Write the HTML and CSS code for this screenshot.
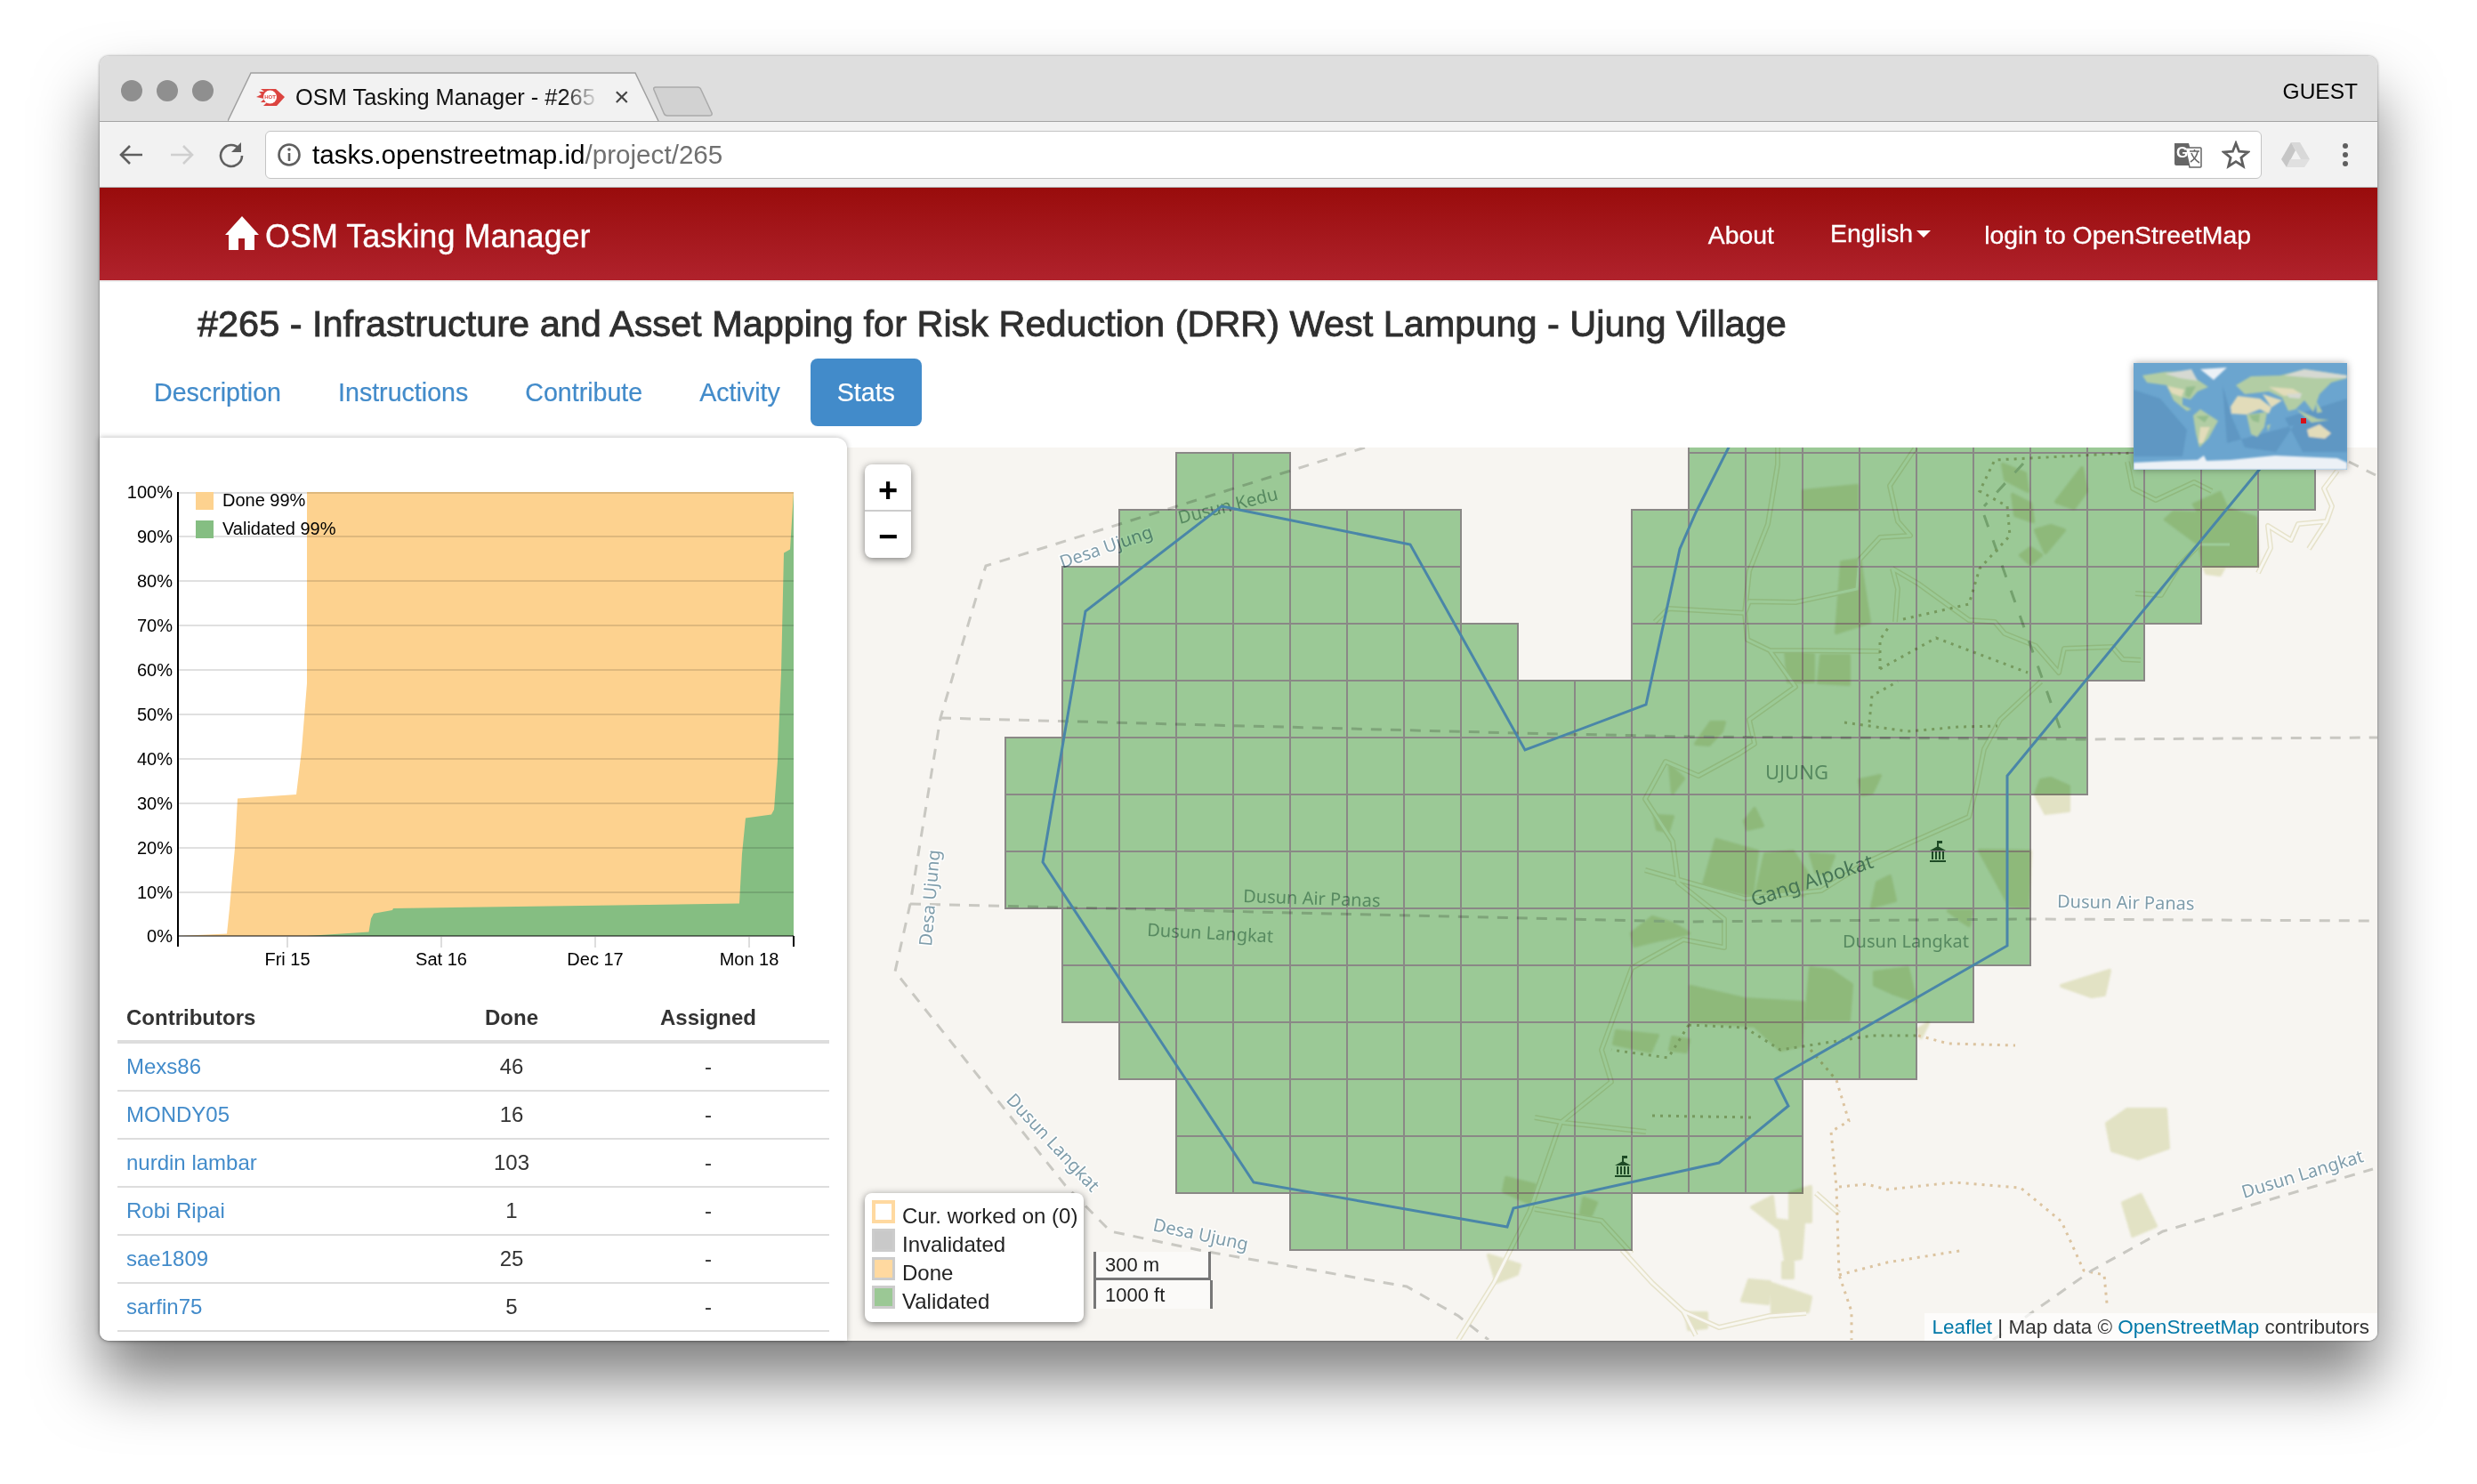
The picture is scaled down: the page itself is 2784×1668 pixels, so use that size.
FILE: index.html
```html
<!DOCTYPE html>
<html lang="en">
<head>
  <meta charset="UTF-8" />
  <meta name="viewport" content="width=device-width, initial-scale=1.0" />
  <title>OSM Tasking Manager - #265</title>
  <link rel="stylesheet" href="styles.css">
</head>
<body>
  <div class="window">

    <div class="tabstrip">
      <div class="dots"><span></span><span></span><span></span></div>
      <div class="tab">
        <svg class="tab-shape" width="486" height="56" viewBox="0 0 486 56">
          <path d="M0 55 L26 1 H458 L484 55" />
        </svg>
        <svg class="favicon" width="32" height="20" viewBox="0 0 32 20">
          <path class="fav-red" d="M5 1 H22 L32 10 L23 20 H8 L12 16 H5 L9 12 L0 10 L6 7 L3 4 H9 Z" />
          <circle class="fav-white" cx="15.5" cy="10" r="7.5" />
          <text class="fav-text" x="15.5" y="12">HOT</text>
        </svg>
        <span class="tab-title">OSM Tasking Manager - #265</span>
        <span class="tab-close">×</span>
      </div>
      <svg class="newtab" width="68" height="34" viewBox="0 0 68 34">
        <path d="M3 1 H50 Q53 1 54 4 L66 30 Q67 33 63 33 H16 Q13 33 12 30 L1 4 Q0 1 3 1 Z" />
      </svg>
      <span class="guest">GUEST</span>
    </div>

    <div class="toolbar">
      <svg class="tool" width="32" height="32" viewBox="0 0 32 32">
        <path class="ico-line" d="M28 16 H5 M14 6 L4 16 L14 26" />
      </svg>
      <svg class="tool tool-off" width="32" height="32" viewBox="0 0 32 32">
        <path class="ico-line" d="M4 16 H27 M18 6 L28 16 L18 26" />
      </svg>
      <svg class="tool" width="32" height="32" viewBox="0 0 32 32">
        <path class="ico-line" d="M25 9 A12 12 0 1 0 28 17" />
        <path class="ico-fill" d="M27 2 V13 H16 Z" />
      </svg>
      <div class="urlbar">
        <svg width="28" height="28" viewBox="0 0 28 28">
          <circle class="ico-line" cx="14" cy="14" r="11.5" />
          <path class="ico-line" d="M14 12 V21" />
          <circle class="ico-fill" cx="14" cy="8" r="1.8" />
        </svg>
        <span class="url"><b>tasks.openstreetmap.id</b>/project/265</span>
        <svg class="translate" width="32" height="30" viewBox="0 0 32 30">
          <path class="tr-back" d="M1 2 H17 L24 27 H3 Q1 27 1 25 Z" />
          <path class="tr-page" d="M13 7 H30 Q31 7 31 8 V28 Q31 29 30 29 H18 Z" />
          <text class="tr-g" x="3" y="18">G</text>
          <path class="tr-zh" d="M18 11 H29 M23.5 9 V11 M27 11 C26 18 22 21 19 23 M20 13 C22 19 26 22 29 24" />
        </svg>
        <svg class="star" width="32" height="32" viewBox="0 0 32 32">
          <path d="M16 3 L19.6 12.2 L29.5 12.9 L21.9 19.2 L24.3 28.9 L16 23.6 L7.7 28.9 L10.1 19.2 L2.5 12.9 L12.4 12.2 Z" />
        </svg>
      </div>
      <svg class="drive" width="34" height="30" viewBox="0 0 34 30">
        <path class="drive-a" d="M12 1 H22 L33 20 H23 Z" />
        <path class="drive-b" d="M12 1 L17 10 L7 29 L1 20 Z" />
        <path class="drive-c" d="M11 20 H33 L27 29 H7 Z" />
      </svg>
      <div class="kebab"><span></span><span></span><span></span></div>
    </div>

    <header class="topbar">
      <a class="brand">
        <svg width="38" height="38" viewBox="0 0 38 38">
          <path d="M19 0 L38 21 H33 V38 H22 V25 H15 V38 H4 V21 H0 Z" />
        </svg>
        OSM Tasking Manager
      </a>
      <nav class="topnav">
        <a>About</a>
        <a class="lang">English<i class="caret"></i></a>
        <a>login to OpenStreetMap</a>
      </nav>
    </header>

    <h1 class="title">#265 - Infrastructure and Asset Mapping for Risk Reduction (DRR) West Lampung - Ujung Village</h1>

    <ul class="pills">
      <li>Description</li>
      <li>Instructions</li>
      <li>Contribute</li>
      <li>Activity</li>
      <li class="on">Stats</li>
    </ul>

    <svg class="minimap" width="240" height="120" viewBox="0 0 240 120">
      <defs>
        <filter id="soft" x="-10%" y="-10%" width="120%" height="120%"><feGaussianBlur stdDeviation="1.2" /></filter>
      </defs>
      <rect class="mm-sea" width="240" height="120" />
      <g filter="url(#soft)">
        <path class="mm-deep" d="M0 30 L30 40 L60 75 L55 105 L0 105 Z M100 25 L110 60 L125 95 L160 100 L180 70 L150 78 L105 90 Z M170 62 L240 40 V100 L190 100 Z" />
        <path class="mm-land" d="M10 14 L35 10 L59 9 L72 19 L84 27 L72 32 L64 41 L55 39 L55 47 L65 52 L60 54 L45 42 L37 25 L15 22 Z" />
        <path class="mm-sand" d="M38 26 L57 30 L54 38 L43 34 Z" />
        <path class="mm-green" d="M59 27 L70 26 L63 39 L58 37 Z" />
        <path class="mm-grey" d="M35 12 L65 7 L72 20 L52 17 Z" />
        <path class="mm-land" d="M67 59 L75 52 L95 65 L84 85 L74 95 L70 79 Z" />
        <path class="mm-sand" d="M75 72 L86 72 L78 90 L73 90 Z" />
        <path class="mm-green" d="M70 60 L85 59 L80 67 Z" />
        <path class="mm-land" d="M115 25 L132 15 L165 14 L192 7 L240 14 V17 L222 22 L209 35 L202 55 L192 42 L182 52 L174 54 L167 39 L152 32 L125 35 Z" />
        <path class="mm-sand" d="M109 49 L117 37 L142 40 L155 50 L152 57 L142 52 L127 58 L110 57 Z" />
        <path class="mm-land" d="M127 58 L150 55 L147 72 L139 83 L132 80 Z" />
        <path class="mm-green" d="M130 59 L142 57 L141 67 L134 65 Z" />
        <path class="mm-sand" d="M145 35 L167 42 L155 50 Z M152 27 L179 29 L189 35 L169 37 Z" />
        <path class="mm-grey" d="M169 14 L192 7 L240 14 L239 17 L205 17 Z M172 35 L189 34 L187 40 L175 39 Z" />
        <path class="mm-land" d="M183 52 L207 63 L220 64 L200 67 Z M205 42 L212 55 L206 56 Z M150 70 L154 69 L151 77 Z" />
        <path class="mm-sand" d="M195 75 L209 69 L222 79 L215 85 L197 83 Z" />
        <path class="mm-ice" d="M75 7 L105 5 L90 19 Z M0 112 L42 110 L72 109 L79 104 L82 110 L109 109 L159 104 L229 107 L240 112 V120 H0 Z" />
      </g>
      <rect class="mm-pin" x="188" y="62" width="6" height="6" />
    </svg>

    <div class="content">
      <aside class="panel">
        <svg class="chart" width="840" height="627" viewBox="112 493 840 627">
          <g transform="translate(200 554)">
            <path class="area-done" d="M0 499 L55 496.6 L58 468 L64 400 L67 344.4 L133 340 L139 290 L145 215 V0 H692 V499 Z" />
            <path class="area-valid" d="M145 499 L214.5 494.6 L217 479.6 L220 473.7 L241 470 L242 468 L631 462.6 L634 406.5 L638 366.5 L667 362.6 L670 357 L674 301.7 L678 203 L681 68.4 L688 64.5 L692 0 V499 Z" />
            <path class="grid" d="M0 1 H692 M0 50 H692 M0 100 H692 M0 150 H692 M0 200 H692 M0 250 H692 M0 300 H692 M0 350 H692 M0 400 H692 M0 450 H692" />
            <path class="base" d="M0 499 H692" />
            <path class="tick-soft" d="M123 500 V512 M296 500 V512 M469 500 V512 M642 500 V512" />
            <path class="axis" d="M0 0 V511 M692 499 V511" />
            <g class="ylabels">
              <text x="-6" y="7">100%</text>
              <text x="-6" y="57">90%</text>
              <text x="-6" y="107">80%</text>
              <text x="-6" y="157">70%</text>
              <text x="-6" y="207">60%</text>
              <text x="-6" y="257">50%</text>
              <text x="-6" y="307">40%</text>
              <text x="-6" y="357">30%</text>
              <text x="-6" y="407">20%</text>
              <text x="-6" y="457">10%</text>
              <text x="-6" y="506">0%</text>
            </g>
            <g class="xlabels">
              <text x="123" y="532">Fri 15</text>
              <text x="296" y="532">Sat 16</text>
              <text x="469" y="532">Dec 17</text>
              <text x="642" y="532">Mon 18</text>
            </g>
            <rect class="area-done" x="20" y="0" width="20" height="20" />
            <rect class="area-valid" x="20" y="32" width="20" height="20" />
            <text class="chart-key" x="50" y="16">Done 99%</text>
            <text class="chart-key" x="50" y="48">Validated 99%</text>
          </g>
        </svg>

        <table class="people">
          <thead>
            <tr><th>Contributors</th><th>Done</th><th>Assigned</th></tr>
          </thead>
          <tbody>
            <tr><td><a>Mexs86</a></td><td>46</td><td>-</td></tr>
            <tr><td><a>MONDY05</a></td><td>16</td><td>-</td></tr>
            <tr><td><a>nurdin lambar</a></td><td>103</td><td>-</td></tr>
            <tr><td><a>Robi Ripai</a></td><td>1</td><td>-</td></tr>
            <tr><td><a>sae1809</a></td><td>25</td><td>-</td></tr>
            <tr><td><a>sarfin75</a></td><td>5</td><td>-</td></tr>
          </tbody>
        </table>
      </aside>

      <div class="map">
        <svg class="map-canvas" width="1720" height="1003" viewBox="952 504 1720 1003">
          <defs>
            <path id="roads" d="M1998 504 L1998 523 L1987 590 L1966 643 L1961 690 L1964 720 L1989 732 L2018 773 L1966 810 L1972 837 L1955 848 L1909 873 L1872 857 L1849 899 L1880 947 L1886 993 L1938 1034 L1938 1066 L1892 1057 L1834 1089 L1800 1181 L1811 1217 L1754 1263 L1719 1363 L1679 1443 L1639 1507
              M2153 504 L2124 547 L2133 587 L2147 603 L2113 605 L2090 630 L2087 663 L2018 678 L1966 677 L1961 690 L1875 685 L1860 700
              M2127 640 L2133 663 L2130 700
              M2127 640 L2156 657 L2213 698 L2242 700 L2253 713 L2288 727 L2314 757 L2320 730 L2374 728 L2386 742 L2406 743
              M1989 732 L2113 733
              M2294 767 L2248 810 L2230 843 L2222 883 L2213 919 L2098 970 L2047 1002 L1961 1011 L1849 979
              M2391 520 L2397 550 L2423 563 L2466 543 L2486 553
              M2627 530 L2612 550 L2621 570 L2615 587 L2583 590 L2575 608 L2549 592 L2552 617 L2538 645
              M2615 587 L2595 618
              M2506 613 L2472 613 L2449 637 L2429 670 L2400 668
              M1823 1406 L1857 1443 L1892 1475 L1932 1493 L1989 1480 L2030 1477
              M1892 1475 L1906 1502
              M2041 1342 L2067 1365
              M1725 1360 L1800 1373 L1834 1410
              M1725 1257 L1759 1263 L1850 1273" />
            <symbol id="temple" viewBox="0 0 20 24">
              <path d="M9 0 H15 V3 H11 V7 H9 Z M1 11 L10 6 L19 11 Z M1 22 H19 V24 H1 Z M3 12 H5 V21 H3 Z M7 12 H9 V21 H7 Z M11 12 H13 V21 H11 Z M15 12 H17 V21 H15 Z" />
            </symbol>
          </defs>

          <g class="land">
            <path d="M2288 894 L2325 894 L2325 912 L2299 915 Z" />
            <path d="M2317 1109 L2371 1092 L2365 1119 L2351 1121 Z" />
            <path d="M2368 1264 L2391 1248 L2434 1248 L2437 1291 L2403 1303 L2374 1294 Z" />
            <path d="M2386 1353 L2406 1344 L2423 1379 L2397 1390 Z" />
            <path d="M1969 1358 L1992 1346 L1995 1372 L2027 1376 L2024 1415 L2007 1418 L2001 1383 Z" />
            <path d="M2012 1342 L2035 1335 L2035 1374 L2012 1374 Z" />
            <path d="M2004 1420 H2015 V1437 H2004 Z" />
            <path d="M1966 1440 L1989 1442 L1987 1466 L1958 1463 Z" />
            <path d="M1991 1444 L2035 1459 L2032 1475 L1992 1480 Z" />
            <path d="M1895 1477 H1918 V1493 L1898 1495 Z" />
            <path d="M2477 638 H2500 L2495 647 L2480 645 Z" />
            <path d="M2156 1158 L2167 1151 L2159 1167 Z" />
            <path d="M1673 1412 L1708 1423 L1705 1433 L1682 1442 Z" />
            <path d="M2027 553 L2087 547 V573 H2027 Z" />
            <path d="M2070 633 L2090 630 L2101 700 L2064 712 Z" />
            <path d="M2007 733 L2038 737 V767 L2010 767 Z" />
            <path d="M2047 738 H2078 V770 L2044 768 Z" />
            <path d="M2251 523 L2276 533 L2279 553 L2254 540 Z" />
            <path d="M2262 557 L2282 567 L2285 587 L2265 580 Z" />
            <path d="M2340 527 L2345 553 L2331 572 L2311 565 Z" />
            <path d="M2288 597 L2305 592 L2320 597 L2299 622 Z" />
            <path d="M2271 625 L2282 617 L2294 625 L2282 635 Z" />
            <path d="M2466 568 L2495 555 L2503 573 L2535 583 L2538 637 L2477 638 L2472 613 L2434 585 L2443 577 L2472 578 Z" />
            <path d="M1923 813 H1938 L1935 823 L1921 838 L1906 837 Z" />
            <path d="M1877 862 L1892 876 L1880 892 Z" />
            <path d="M2090 878 L2113 873 L2104 892 L2093 894 Z" />
            <path d="M1860 918 L1880 919 L1875 935 L1863 933 Z" />
            <path d="M1961 924 L1972 910 L1981 929 L1964 933 Z" />
            <path d="M1929 945 L1975 958 L1969 1007 L1915 995 Z" />
            <path d="M1984 961 L2015 958 L2032 984 L2027 1007 L1975 1002 Z" />
            <path d="M2035 961 L2061 963 L2053 984 L2041 981 Z" />
            <path d="M2110 993 L2124 986 L2130 1013 L2104 1020 Z" />
            <path d="M2225 957 L2282 958 L2279 1020 L2259 1019 Z" />
            <path d="M2190 1025 H2216 L2213 1041 L2202 1034 Z" />
            <path d="M1834 1050 L1857 1032 L1880 1039 L1898 1050 L1857 1059 L1837 1064 Z" />
            <path d="M1900 1110 L1961 1124 L2027 1128 L2024 1176 L2001 1181 L1972 1154 L1900 1149 Z" />
            <path d="M2035 1089 L2058 1092 L2081 1108 L2078 1147 H2030 Z" />
            <path d="M2107 1094 L2144 1089 L2153 1126 L2127 1117 L2107 1108 Z" />
            <path d="M1817 1160 L1863 1165 L1855 1183 L1814 1174 Z" />
            <path d="M1880 1167 L1898 1170 L1895 1183 L1877 1181 Z" />
            <path d="M2294 878 L2305 876 L2325 885 V894 H2288 Z" />
            <path d="M1693 1325 L1725 1333 L1719 1353 L1690 1340 Z" />
            <path d="M1780 1348 L1794 1353 L1788 1367 L1777 1365 Z" />
          </g>

          <use href="#roads" class="road-case" />
          <use href="#roads" class="road-fill" />

          <path class="power" d="M2274 522 L2230 570 M2230 580 L2319 830" />
          <g class="path-in">
            <path d="M2073 813 L2144 823 L2202 818 L2245 817" />
            <path d="M2101 813 L2104 783 L2133 767" />
            <path d="M2113 753 L2176 718 L2279 757" />
            <path d="M2139 697 L2213 680 L2225 640 L2259 603 L2256 570 L2225 553 L2242 518 L2397 510" />
            <path d="M2113 753 L2113 720 L2122 707" />
            <path d="M1898 1153 L1961 1156 L2001 1181 L2104 1165 L2156 1165" />
            <path d="M1898 1153 L1875 1190 L1811 1181" />
            <path d="M1857 1255 L1972 1257" />
          </g>
          <g class="path-out">
            <path d="M2156 1165 L2190 1174 L2265 1176" />
            <path d="M2035 1181 L2064 1215 L2078 1261 L2058 1273 L2064 1335 L2067 1434 L2081 1475 V1507" />
            <path d="M2067 1335 L2098 1332 L2121 1338 L2196 1330 L2271 1336 L2317 1374 L2342 1429 L2365 1434 L2368 1466" />
            <path d="M2067 1434 L2121 1420 L2208 1406" />
          </g>

          <g class="border-dash">
            <path d="M1534 504 L1108 637 L1100 663 L1057 808 L1023 1017 L1006 1093 L1197 1333 L1248 1385 L1352 1407 L1581 1447 L1639 1480 L1673 1507" />
            <path d="M1057 808 L1706 825 L1900 829 L2346 832 L2672 830" />
            <path d="M1023 1017 L1890 1037 L2282 1034 L2672 1036" />
            <path d="M2240 1507 L2351 1429 L2431 1385 L2667 1315" />
            <path d="M2640 520 L2670 535" />
          </g>

          <g class="label">
            <text transform="translate(1194 640) rotate(-19)">Desa Ujung</text>
            <text transform="translate(2312 1021) rotate(1)">Dusun Air Panas</text>
            <text transform="translate(2522 1348) rotate(-17)">Dusun Langkat</text>
            <text transform="translate(1047 1065) rotate(-85)">Desa Ujung</text>
            <text transform="translate(1130 1238) rotate(47)">Dusun Langkat</text>
            <text transform="translate(1295 1384) rotate(12)">Desa Ujung</text>
          </g>
          <g class="label-in">
            <text transform="translate(1326 590) rotate(-14)">Dusun Kedu</text>
            <text transform="translate(1397 1015) rotate(2)">Dusun Air Panas</text>
            <text transform="translate(1289 1053) rotate(3)">Dusun Langkat</text>
            <text class="label-place" x="1984" y="877">UJUNG</text>
            <text class="label-road" transform="translate(1971 1020) rotate(-18)">Gang Alpokat</text>
            <text x="2071" y="1066">Dusun Langkat</text>
          </g>
          <use href="#temple" class="temple" x="2168" y="946" width="20" height="24" />
          <use href="#temple" class="temple" x="1814" y="1300" width="20" height="24" />

          <g id="cells" class="cells"></g>

          <path class="aoi" d="M1373 570 L1585 613 L1714 844 L1850 793 L1888 618 L1906 577 L1960 470 L2570 490 L2540 528 L2256 873 L2256 1064 L1995 1214 L2010 1244 L1932 1308 L1701 1359 L1694 1380 L1409 1330 L1172 970 L1220 688 Z" />
        </svg>

        <div class="zoom">
          <a>+</a>
          <a>−</a>
        </div>

        <div class="legend">
          <div><i class="sw sw-cur"></i>Cur. worked on (0)</div>
          <div><i class="sw sw-bad"></i>Invalidated</div>
          <div><i class="sw sw-done"></i>Done</div>
          <div><i class="sw sw-ok"></i>Validated</div>
        </div>

        <div class="scale">
          <div class="scale-m">300 m</div>
          <div class="scale-ft">1000 ft</div>
        </div>

        <div class="attrib"><a>Leaflet</a> | Map data © <a>OpenStreetMap</a> contributors</div>
      </div>
    </div>
  </div>

  <script src="map.js"></script>
</body>
</html>
```

FILE: styles.css
```css
html, body {
  margin: 0;
  padding: 0;
}
body {
  width: 2784px;
  height: 1668px;
  padding: 63px 112px 0;
  box-sizing: border-box;
  overflow: hidden;
  background-color: #ffffff;
  font-family: "Liberation Sans", Arial, sans-serif;
  color: #333;
}
.window {
  position: relative;
  display: flex;
  flex-direction: column;
  width: 2560px;
  height: 1444px;
  border-radius: 10px;
  background-color: #fff;
  box-shadow: 0 44px 70px rgba(0,0,0,0.5), 0 0 3px rgba(0,0,0,0.45);
}

/* browser chrome */
.tabstrip {
  position: relative;
  display: flex;
  align-items: flex-end;
  flex: none;
  height: 74px;
  box-sizing: border-box;
  border-radius: 10px 10px 0 0;
  background-color: #dedede;
  border-bottom: 1px solid #a3a3a3;
}
.dots {
  display: flex;
  gap: 16px;
  align-self: flex-start;
  margin: 27px 0 0 24px;
}
.dots span {
  width: 24px;
  height: 24px;
  border-radius: 50%;
  background-color: #8f8f8f;
}
.tab {
  position: relative;
  display: flex;
  align-items: center;
  width: 486px;
  height: 56px;
  margin: 0 0 -1px 16px;
}
.tab-shape {
  position: absolute;
  left: 0;
  top: 0;
}
.tab-shape path {
  fill: #f2f2f2;
  stroke: #a0a0a0;
  stroke-width: 1.5;
}
.favicon {
  position: relative;
  margin-left: 32px;
  flex: none;
}
.fav-red { fill: #dc4440; }
.fav-white { fill: #fff; }
.fav-text {
  font-size: 6px;
  font-weight: bold;
  text-anchor: middle;
  fill: #dc4440;
}
.tab-title {
  position: relative;
  width: 342px;
  margin-left: 12px;
  font-size: 25.4px;
  color: #111;
  white-space: nowrap;
  overflow: hidden;
  -webkit-mask-image: linear-gradient(to right, #000 88%, transparent 100%);
}
.tab-close {
  position: relative;
  margin-left: 16px;
  font-size: 30px;
  color: #444;
}
.newtab {
  align-self: flex-start;
  margin: 34px 0 0 -8px;
}
.newtab path {
  fill: #d2d2d2;
  stroke: #aaa;
  stroke-width: 1.5;
}
.guest {
  margin: 6px 22px 0 auto;
  align-self: center;
  font-size: 24.5px;
  color: #000;
}
.toolbar {
  display: flex;
  align-items: center;
  flex: none;
  height: 74px;
  box-sizing: border-box;
  background-color: #f2f2f2;
  border-bottom: 1px solid #b4b4b4;
}
.tool {
  margin-left: 24px;
  flex: none;
}
.tool:first-child { margin-left: 20px; }
.ico-line {
  fill: none;
  stroke: #5f5f5f;
  stroke-width: 2.6;
}
.ico-fill { fill: #5f5f5f; }
.tool-off .ico-line { stroke: #cfcfcf; }
.urlbar {
  display: flex;
  align-items: center;
  width: 2244px;
  height: 54px;
  margin-left: 22px;
  box-sizing: border-box;
  padding: 0 12px;
  background-color: #fff;
  border: 1px solid #c4c4c4;
  border-radius: 6px;
}
.url {
  margin-left: 12px;
  font-size: 29.65px;
  color: #707070;
}
.url b {
  font-weight: normal;
  color: #000;
}
.translate {
  margin-left: auto;
}
.tr-back { fill: #666; }
.tr-page {
  fill: #fff;
  stroke: #666;
  stroke-width: 1.5;
}
.tr-g {
  font-size: 17px;
  font-weight: bold;
  fill: #fff;
}
.tr-zh {
  fill: none;
  stroke: #666;
  stroke-width: 1.6;
}
.star {
  margin-left: 22px;
}
.star path {
  fill: none;
  stroke: #5f5f5f;
  stroke-width: 2.8;
}
.drive {
  margin-left: 21px;
  flex: none;
}
.drive-a { fill: #d8d8d8; }
.drive-b { fill: #c6c6c6; }
.drive-c { fill: #e0e0e0; }
.kebab {
  display: flex;
  flex-direction: column;
  gap: 4px;
  margin-left: 36px;
}
.kebab span {
  width: 6px;
  height: 6px;
  border-radius: 50%;
  background-color: #5f5f5f;
}

/* site header */
.topbar {
  display: flex;
  align-items: center;
  flex: none;
  height: 104px;
  box-sizing: content-box;
  background: linear-gradient(to bottom, #990c0c, #b0222c);
  border-bottom: 2px solid #eeeeee;
  color: #fff;
}
.brand {
  display: flex;
  align-items: center;
  gap: 7px;
  margin: 5px 0 0 141px;
  font-size: 36px;
  -webkit-text-stroke: 0.3px #fff;
}
.brand svg {
  fill: #fff;
  margin-top: -8px;
}
.topnav {
  display: flex;
  gap: 63px;
  margin: 3px 142px 0 auto;
  font-size: 28.4px;
  -webkit-text-stroke: 0.3px #fff;
}
.lang {
  display: flex;
  align-items: center;
  margin: -4px -3px 0 0;
}
.caret {
  width: 0;
  height: 0;
  margin-left: 4px;
  border-top: 8px solid #fff;
  border-left: 8px solid transparent;
  border-right: 8px solid transparent;
}

/* project title and tabs */
.title {
  flex: none;
  margin: 24px 0 16px 110px;
  font-size: 41.45px;
  line-height: 46px;
  font-weight: normal;
  color: #2f2f2f;
  -webkit-text-stroke: 0.9px #2f2f2f;
}
.pills {
  display: flex;
  flex: none;
  gap: 4px;
  list-style: none;
  margin: 0 0 13px 31px;
  padding: 0;
  font-size: 28.6px;
  line-height: 40px;
  color: #428bca;
  -webkit-text-stroke: 0.2px;
}
.pills li {
  padding: 18px 30px;
  border-radius: 8px;
}
.pills .on {
  color: #fff;
  background-color: #428bca;
}
.minimap {
  position: absolute;
  left: 2286px;
  top: 345px;
  z-index: 5;
  box-shadow: 0 0 8px rgba(0,0,0,0.35);
}
.mm-sea { fill: #6ba5cf; }
.mm-deep { fill: #5e97c3; }
.mm-land { fill: #b2cda4; }
.mm-green { fill: #94bd8d; }
.mm-sand { fill: #e2dcba; }
.mm-grey { fill: #d6d9d2; }
.mm-ice { fill: #ecf1f6; }
.mm-pin { fill: #d8101a; }

/* stats panel */
.content {
  display: flex;
  flex: 1;
  min-height: 0;
}
.panel {
  position: relative;
  z-index: 2;
  flex: none;
  width: 840px;
  box-sizing: border-box;
  background-color: #fff;
  border-radius: 0 12px 0 10px;
  box-shadow: 0 0 6px rgba(0,0,0,0.3);
}
.chart {
  display: block;
}
.area-done { fill: #fdd28f; }
.area-valid { fill: #85be82; }
.grid {
  fill: none;
  stroke: #000;
  stroke-opacity: 0.12;
  stroke-width: 2;
}
.base {
  stroke: #000;
  stroke-opacity: 0.5;
  stroke-width: 2;
}
.tick-soft {
  stroke: #ddd;
  stroke-width: 2;
}
.axis {
  fill: none;
  stroke: #000;
  stroke-width: 2;
}
.chart text {
  font-size: 20px;
  fill: #000;
}
.ylabels text { text-anchor: end; }
.xlabels text { text-anchor: middle; }
.people {
  width: 800px;
  margin-left: 20px;
  border-collapse: collapse;
  table-layout: fixed;
  font-size: 24px;
}
.people th, .people td {
  padding: 0 10px;
  text-align: center;
  height: 52px;
  border-bottom: 2px solid #ddd;
}
.people th {
  height: 50px;
  border-bottom: 4px solid #ddd;
}
.people th:first-child, .people td:first-child {
  width: 338px;
  text-align: left;
}
.people th:nth-child(2) { width: 150px; }
.people a { color: #428bca; }

/* map */
.map {
  position: relative;
  flex: 1;
  margin-top: 11px;
  overflow: hidden;
  border-radius: 0 0 10px 0;
  background-color: #f7f5f1;
}
.map-canvas {
  display: block;
}
.land {
  filter: blur(1px);
}
.land path {
  fill: #e2e2c4;
  stroke: #e2e2c4;
  stroke-width: 4;
  stroke-linejoin: round;
}
.road-case {
  fill: none;
  stroke: #e6e2ca;
  stroke-width: 6;
  stroke-linejoin: round;
}
.road-fill {
  fill: none;
  stroke: #f8f7f1;
  stroke-width: 3;
  stroke-linejoin: round;
}
.power {
  fill: none;
  stroke: #b8c4ae;
  stroke-width: 3;
  stroke-dasharray: 14 16;
}
.path-in path, .path-out path {
  fill: none;
  stroke-width: 3;
  stroke-dasharray: 3 6;
}
.path-in path { stroke: #bcbc96; }
.path-out path { stroke: #dcc4a0; }
.border-dash path {
  fill: none;
  stroke: #c9c8c2;
  stroke-width: 3;
  stroke-dasharray: 12 10;
}
.label text, .label-in text {
  font-family: "Noto Sans", sans-serif;
  font-size: 20px;
}
.label text {
  fill: #7f9dab;
  stroke: #fff;
  stroke-width: 3px;
  stroke-opacity: 0.85;
  paint-order: stroke;
}
.label-in text { fill: #8aa89a; }
.label-in .label-place { font-size: 22px; }
.label-in .label-road {
  font-size: 22.5px;
  fill: #6f8f88;
}
.cells {
  mix-blend-mode: multiply;
}
.cells rect {
  fill: #a0d19f;
  stroke: #8e8e8e;
  stroke-width: 2;
}
.temple { fill: #2e5a3a; }
.aoi {
  fill: none;
  stroke: #4a86a8;
  stroke-width: 3;
}
.zoom {
  position: absolute;
  left: 20px;
  top: 19px;
  display: flex;
  flex-direction: column;
  width: 52px;
  border-radius: 8px;
  background-color: #fff;
  box-shadow: 0 2px 8px rgba(0,0,0,0.5);
}
.zoom a {
  height: 52px;
  line-height: 57px;
  text-align: center;
  font-size: 38px;
  font-weight: bold;
  color: #000;
}
.zoom a:first-child {
  border-bottom: 2px solid #ccc;
  height: 51px;
  line-height: 58px;
}
.legend {
  position: absolute;
  left: 20px;
  top: 838px;
  width: 246px;
  height: 145px;
  box-sizing: border-box;
  padding: 8px 0 0 8px;
  border-radius: 8px;
  background-color: #fff;
  box-shadow: 0 2px 8px rgba(0,0,0,0.5);
  font-size: 24px;
  line-height: 32px;
  color: #222;
}
.legend div {
  display: flex;
  align-items: flex-start;
  height: 32px;
  line-height: 35px;
  white-space: nowrap;
}
.sw {
  flex: none;
  width: 26px;
  height: 26px;
  margin-right: 8px;
  box-sizing: border-box;
  border: 3px solid #ccc;
}
.sw-cur { background-color: #fff; border: 4px solid #ffd9a0; }
.sw-bad { background-color: #c9c9c9; }
.sw-done { background-color: #ffd9a0; }
.sw-ok { background-color: #9bc895; }
.scale {
  position: absolute;
  left: 277px;
  top: 904px;
  font-size: 22px;
  color: #222;
}
.scale div {
  box-sizing: border-box;
  height: 32px;
  padding-left: 10px;
  line-height: 30px;
  background-color: rgba(255,255,255,0.5);
}
.scale-m {
  width: 132px;
  border: 3px solid #777;
  border-top: 0;
}
.scale div.scale-ft {
  width: 134px;
  line-height: 33px;
  border: 3px solid #777;
  border-top: 0;
  border-bottom: 0;
}
.attrib {
  position: absolute;
  right: 0;
  bottom: 0;
  height: 31px;
  padding: 0 9px;
  line-height: 31px;
  font-size: 22.5px;
  color: #333;
  background-color: rgba(255,255,255,0.7);
}
.attrib a { color: #0078a8; }
```

FILE: map.js
```js
// rows of validated task squares: [row, first column, end column]
const tileRows = [
  [-1, 12, 21], [0, 3, 5], [0, 12, 23], [1, 2, 8], [1, 11, 22],
  [2, 1, 8], [2, 11, 21], [3, 1, 9], [3, 11, 20], [4, 1, 19],
  [5, 0, 19], [6, 0, 18], [7, 0, 18], [8, 1, 18], [9, 1, 17],
  [10, 2, 16], [11, 3, 14], [12, 3, 14], [13, 5, 11]
];

const cells = document.getElementById('cells');

for (const [row, from, to] of tileRows) {
  for (let col = from; col < to; col++) {
    const rect = document.createElementNS('http://www.w3.org/2000/svg', 'rect');
    rect.setAttribute('x', 1130 + col * 64);
    rect.setAttribute('y', 510 + row * 64);
    rect.setAttribute('width', 64);
    rect.setAttribute('height', 64);
    cells.appendChild(rect);
  }
}
```
